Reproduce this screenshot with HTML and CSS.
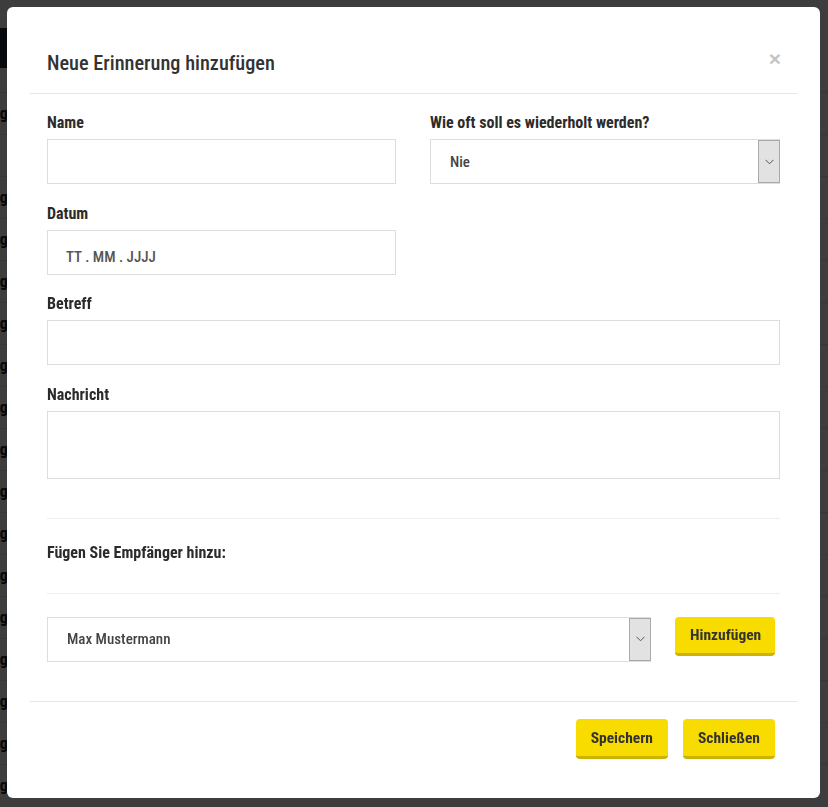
FILE: index.html
```html
<html lang="de"><head>
    <meta charset="UTF-8">
    <title>Erinnerungen</title>
    <link rel="stylesheet" href="styles.css">
</head>
<body>
    <div class="page">
        <div class="toolbar"><span class="toolbar-icon">›</span></div>
        <ul class="reminder-list">
            <li>Zahlung</li>
            <li>Abruf</li>
            <li>Zahlung</li>
            <li>Zahlung</li>
            <li>Zahlung</li>
            <li>Zahlung</li>
            <li>Zahlung</li>
            <li>Zahlung</li>
            <li>Zahlung</li>
            <li>Zahlung</li>
            <li>Zahlung</li>
            <li>Zahlung</li>
            <li>Zahlung</li>
            <li>Zahlung</li>
            <li>Zahlung</li>
            <li>Zahlung</li>
            <li>Zahlung</li>
        </ul>
    </div>
    <div class="backdrop"></div>

    <div class="modal">
        <div class="modal-header">
            <h4 class="modal-title">Neue Erinnerung hinzufügen</h4>
            <button class="close">×</button>
        </div>
        <div class="modal-body">
            <div class="row">
                <div class="form-group">
                    <label>Name</label>
                    <input class="form-control" type="text">
                </div>
                <div class="form-group">
                    <label>Wie oft soll es wiederholt werden?</label>
                    <div class="select-box">
                        <select class="form-control">
                            <option>Nie</option>
                        </select>
                        <span class="select-arrow">
                            <svg width="9" height="6" viewBox="0 0 9 6"><path d="M0.5 0.8 L4.5 4.8 L8.5 0.8" fill="none" stroke="#555" stroke-width="1"/></svg>
                        </span>
                    </div>
                </div>
            </div>
            <div class="row">
                <div class="form-group">
                    <label>Datum</label>
                    <input class="form-control date-input" type="text" value="TT . MM . JJJJ">
                </div>
            </div>
            <div class="form-group">
                <label>Betreff</label>
                <input class="form-control" type="text">
            </div>
            <div class="form-group">
                <label>Nachricht</label>
                <textarea class="form-control message"></textarea>
            </div>

            <div class="recipients-head">
                <label>Fügen Sie Empfänger hinzu:</label>
            </div>
            <div class="recipient-row">
                <div class="select-box">
                    <select class="form-control recipient">
                        <option>Max Mustermann</option>
                    </select>
                    <span class="select-arrow">
                        <svg width="9" height="6" viewBox="0 0 9 6"><path d="M0.5 0.8 L4.5 4.8 L8.5 0.8" fill="none" stroke="#555" stroke-width="1"/></svg>
                    </span>
                </div>
                <button class="btn btn-add">Hinzufügen</button>
            </div>
        </div>
        <div class="modal-footer">
            <button class="btn">Speichern</button>
            <button class="btn">Schließen</button>
        </div>
    </div>
</body></html>
```
FILE: styles.css
```css
body {
    margin: 0;
    font-family: 'Roboto Condensed', Roboto, 'Liberation Sans Narrow', sans-serif;
    font-stretch: condensed;
    color: #333;
    background-color: #fff;
    height: 807px;
    overflow: hidden;
}

/* page behind the dialog */
.page {
    padding-top: 28px;
}
.toolbar {
    height: 40px;
    width: 14px;
    background-color: #1c2a3e;
    display: flex;
    align-items: center;
    justify-content: flex-end;
    overflow: hidden;
}
.toolbar-icon {
    font-size: 28px;
    line-height: 28px;
    color: #b8c4d4;
    padding-right: 1px;
}
.reminder-list {
    list-style: none;
    margin: 24px 0 0;
    padding: 0;
}
.reminder-list li {
    height: 41px;
    border-top: 1px solid #e4e4e4;
    line-height: 41px;
    font-size: 16px;
    font-weight: 700;
    color: #222;
    margin-left: -44px;
    white-space: nowrap;
}
.backdrop {
    position: fixed;
    top: 0;
    left: 0;
    right: 0;
    bottom: 0;
    background-color: rgba(0, 0, 0, 0.76);
}

/* dialog */
.modal {
    position: fixed;
    top: 7px;
    left: 7px;
    width: 813px;
    height: 791px;
    background-color: #fff;
    border-radius: 6px;
    display: flex;
    flex-direction: column;
}
.modal-header {
    margin: 0 23px;
    padding: 44px 17px 18px;
    border-bottom: 1px solid #e5e5e5;
    display: flex;
    align-items: center;
    justify-content: space-between;
}
.modal-title {
    margin: 0;
    font-size: 20.3px;
    font-weight: 500;
    line-height: 24px;
    color: #333;
}
.close {
    background: none;
    border: none;
    padding: 0;
    margin-top: -8px;
    margin-right: -1px;
    font-family: 'Liberation Sans', Arial, sans-serif;
    font-size: 21px;
    font-weight: 700;
    line-height: 20px;
    color: #c4c4c4;
    cursor: pointer;
}
.modal-body {
    padding: 19px 40px 39px;
    flex: 1;
}
.row {
    display: grid;
    grid-template-columns: 349px 350px;
    column-gap: 34px;
}
.form-group {
    margin-bottom: 19.5px;
}
label {
    display: block;
    font-size: 16px;
    font-weight: 700;
    line-height: 20px;
    margin-bottom: 6px;
    color: #2b2b2b;
}
.form-control {
    display: block;
    width: 100%;
    height: 45px;
    box-sizing: border-box;
    border: 1px solid #ddd;
    border-radius: 0;
    background-color: #fff;
    padding: 0 18px;
    font-family: inherit;
    font-stretch: condensed;
    font-size: 15px;
    font-weight: 500;
    color: #555;
    outline: none;
}
.date-input {
    padding-top: 10px;
}
.message {
    height: 68px;
    resize: none;
}
select.form-control {
    appearance: none;
    -webkit-appearance: none;
    padding-left: 19px;
    color: #444;
}
.select-box {
    position: relative;
}
.select-arrow {
    position: absolute;
    top: 1px;
    right: 0;
    bottom: 1px;
    width: 20px;
    background-color: #e2e2e2;
    border: 1px solid #a9a9a9;
    display: flex;
    align-items: center;
    justify-content: center;
    pointer-events: none;
}
.recipients-head {
    margin-top: 39px;
    border-top: 1px solid #eee;
    border-bottom: 1px solid #eee;
    padding: 24px 0 30px;
    margin-bottom: 23px;
}
.recipients-head label {
    margin: 0;
}
.recipient-row {
    display: flex;
    align-items: flex-start;
    padding-right: 5px;
}
.recipient-row .select-box {
    flex: 1;
    margin-right: 24px;
}
.recipient {
    padding-left: 17px;
}
.btn {
    height: 40px;
    padding: 0 15px;
    background-color: #f8dc00;
    border: none;
    border-bottom: 3px solid #cdb300;
    border-radius: 4px;
    font-family: inherit;
    font-stretch: condensed;
    font-size: 15.5px;
    font-weight: 700;
    color: #333;
    cursor: pointer;
}
.btn-add {
    width: 100px;
    height: 39px;
}
.modal-footer {
    margin: 0 23px;
    padding: 17px 22px 39px;
    border-top: 1px solid #e5e5e5;
    display: flex;
    justify-content: flex-end;
    gap: 15px;
}
```
